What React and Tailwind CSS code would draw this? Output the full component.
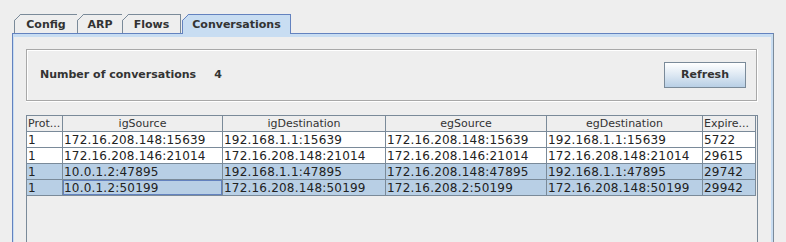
import React from "react";

const rows = [
  { p: "1", a: "172.16.208.148:15639", b: "192.168.1.1:15639", c: "172.16.208.148:15639", d: "192.168.1.1:15639", e: "5722", sel: false },
  { p: "1", a: "172.16.208.146:21014", b: "172.16.208.148:21014", c: "172.16.208.146:21014", d: "172.16.208.148:21014", e: "29615", sel: false },
  { p: "1", a: "10.0.1.2:47895", b: "192.168.1.1:47895", c: "172.16.208.148:47895", d: "192.168.1.1:47895", e: "29742", sel: true },
  { p: "1", a: "10.0.1.2:50199", b: "172.16.208.148:50199", c: "172.16.208.2:50199", d: "172.16.208.148:50199", e: "29942", sel: true, focus: true },
];

function Bevel({ color }) {
  return (
    <svg className="absolute -left-px -top-px" width="7" height="7" viewBox="0 0 7 7">
      <polygon points="0,0 6.5,0 0,6.5" fill="#eeeeee" />
      <line x1="0.5" y1="6.5" x2="6.5" y2="0.5" stroke={color} strokeWidth="1" />
    </svg>
  );
}

function Tab({ label, w, selected, first }) {
  if (selected) {
    return (
      <div
        className="relative z-10 ml-px -mb-px flex h-[20px] items-center justify-center border-t border-l border-r border-[#6382bf] bg-[#c8ddf2] pb-[1px] text-[11px] font-bold text-[#333333]"
        style={{ width: w }}
      >
        <Bevel color="#6382bf" />
        <span className="leading-none">{label}</span>
      </div>
    );
  }
  return (
    <div
      className={`relative flex h-[19px] items-center justify-center border-t border-l border-r border-[#7a8a99] bg-[#eeeeee] text-[11px] font-bold text-[#333333] ${first ? "" : "-ml-px"}`}
      style={{ width: w }}
    >
      <Bevel color="#7a8a99" />
      <span className="leading-none">{label}</span>
    </div>
  );
}

const headers = ["Prot...", "igSource", "igDestination", "egSource", "egDestination", "Expire..."];

export default function App() {
  return (
    <div className="flex h-[242px] w-[786px] flex-col overflow-hidden bg-[#eeeeee] px-[12px] pt-[14px] font-['DejaVu_Sans',sans-serif] text-[#333333]">
      {/* tabs */}
      <div className="flex items-end pl-[2px]">
        <Tab label="Config" w={64} first />
        <Tab label="ARP" w={46} />
        <Tab label="Flows" w={59} />
        <Tab label="Conversations" w={109} selected />
      </div>

      {/* tab content panel */}
      <div className="flex min-h-0 flex-1 flex-col border-t border-l border-r border-t-[#6382bf] border-l-[#6382bf] border-r-[#7a8a99]">
        <div className="flex min-h-0 flex-1 flex-col border-t-[3px] border-l border-r-[2px] border-[#c8ddf2]">
          <div className="flex min-h-0 flex-1 flex-col pl-[12px] pr-[13px] pt-[12px]">
            {/* etched panel */}
            <div className="h-[53px] w-[732px] border-r border-b border-white">
              <div className="flex h-full items-center justify-between border border-[#a8a8a8] pl-[13px] pr-[10px] shadow-[inset_1px_1px_0_#ffffff]">
                <div className="flex items-center text-[11px] font-bold">
                  <span>Number of conversations</span>
                  <span className="ml-[18px]">4</span>
                </div>
                <button className="flex h-[26px] w-[82px] items-center justify-center border border-[#7a8a99] bg-linear-to-b from-white via-[#dde8f3] to-[#b8cfe5] text-[11px] font-bold text-[#333333]">
                  Refresh
                </button>
              </div>
            </div>

            {/* table */}
            <div className="mt-[13px] flex w-[732px] flex-1 flex-col border-t border-l border-r border-[#7a8a99] bg-[#eeeeee]">
              <div className="grid grid-cols-[36px_160px_163px_161px_156px_53px]">
                {headers.map((h, i) => (
                  <div
                    key={h}
                    className={`flex h-[16px] items-center overflow-hidden whitespace-nowrap border-r border-b border-[#7a8a99] bg-[#eeeeee] text-[11px] leading-none text-[#333333] ${i === 0 || i === 5 ? "justify-start pl-[1px]" : "justify-center"}`}
                  >
                    {h}
                  </div>
                ))}
                {rows.map((r, ri) =>
                  [r.p, r.a, r.b, r.c, r.d, r.e].map((v, ci) => (
                    <div
                      key={ri + "-" + ci}
                      className={`flex h-[16px] items-center overflow-hidden whitespace-nowrap border-r border-b border-[#7a8a99] pl-[1px] text-[12px] leading-none tracking-[0.2px] text-[#222222] ${r.sel ? "bg-[#b8cfe5]" : "bg-white"} ${r.focus && ci === 1 ? "shadow-[inset_0_0_0_1px_#6382bf]" : ""}`}
                    >
                      {v}
                    </div>
                  ))
                )}
              </div>
            </div>
          </div>
        </div>
      </div>
    </div>
  );
}
